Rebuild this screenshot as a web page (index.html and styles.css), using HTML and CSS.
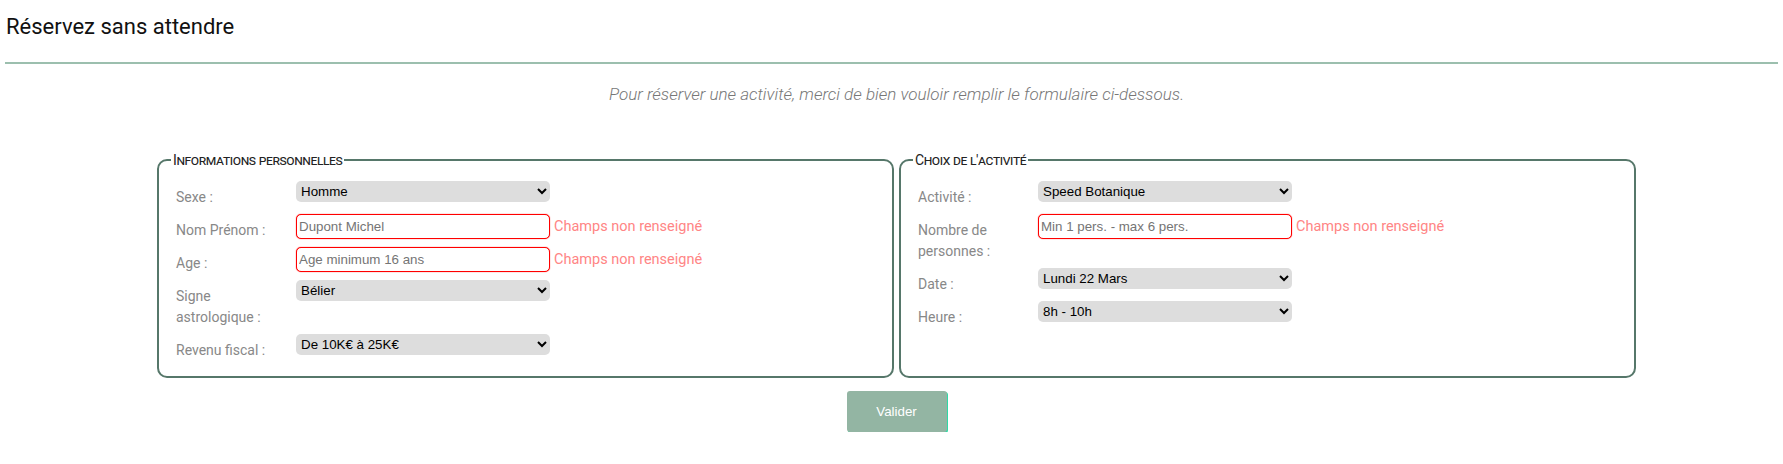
FILE: index.html
```html
<!DOCTYPE html>
<html lang="fr">
<head>
<meta charset="utf-8">
<title>Réservez sans attendre</title>
<link rel="stylesheet" href="styles.css">
</head>
<body>
<h1 class="title">Réservez sans attendre</h1>
<hr class="rule">
<p class="intro">Pour réserver une activité, merci de bien vouloir remplir le formulaire ci-dessous.</p>
<form class="booking">
  <div class="panels">
    <fieldset class="panel">
      <legend class="panel-title">Informations personnelles</legend>
      <div class="row">
        <label class="field-label">Sexe :</label>
        <select class="field-select"><option>Homme</option><option>Femme</option></select>
      </div>
      <div class="row">
        <label class="field-label">Nom Prénom :</label>
        <input class="field-input" type="text" placeholder="Dupont Michel">
        <span class="error">Champs non renseigné</span>
      </div>
      <div class="row">
        <label class="field-label">Age :</label>
        <input class="field-input" type="text" placeholder="Age minimum 16 ans">
        <span class="error">Champs non renseigné</span>
      </div>
      <div class="row">
        <label class="field-label">Signe astrologique :</label>
        <select class="field-select"><option>Bélier</option></select>
      </div>
      <div class="row">
        <label class="field-label">Revenu fiscal :</label>
        <select class="field-select"><option>De 10K€ à 25K€</option></select>
      </div>
    </fieldset>
    <fieldset class="panel">
      <legend class="panel-title">Choix de l'activité</legend>
      <div class="row">
        <label class="field-label">Activité :</label>
        <select class="field-select"><option>Speed Botanique</option></select>
      </div>
      <div class="row">
        <label class="field-label">Nombre de personnes :</label>
        <input class="field-input" type="text" placeholder="Min 1 pers. - max 6 pers.">
        <span class="error">Champs non renseigné</span>
      </div>
      <div class="row">
        <label class="field-label">Date :</label>
        <select class="field-select"><option>Lundi 22 Mars</option></select>
      </div>
      <div class="row">
        <label class="field-label">Heure :</label>
        <select class="field-select"><option>8h - 10h</option></select>
      </div>
    </fieldset>
  </div>
  <div class="actions">
    <button class="submit" type="button">Valider</button>
  </div>
</form>
</body>
</html>
```

FILE: styles.css
```css
html, body {
  margin: 0;
  padding: 0;
  background: #fff;
}
body {
  padding: 0 5px;
  font-family: Roboto, "Liberation Sans", sans-serif;
}
.title {
  margin: 0;
  padding: 14px 0 0 1px;
  font-size: 22px;
  line-height: 26px;
  font-weight: 400;
  color: #111;
}
.rule {
  margin: 22px 0 0 0;
  border: 0;
  border-top: 2px solid #9cbfae;
  height: 0;
}
.intro {
  margin: 19px 0 0 152px;
  width: 1479px;
  text-align: center;
  font-size: 17px;
  line-height: 22px;
  font-style: italic;
  font-weight: 300;
  color: #777;
}
.booking {
  margin: 46px 0 0 152px;
  width: 1479px;
}
.panels {
  display: flex;
  gap: 5px;
  align-items: stretch;
}
.panel {
  flex: 1 1 0;
  min-width: 0;
  margin: 0;
  padding: 12px 15px 15px 17px;
  border: 2px solid #56776a;
  border-radius: 10px;
}
.panel-title {
  margin-left: -5px;
  padding: 0 2px;
  font-size: 14px;
  line-height: 18px;
  letter-spacing: -0.4px;
  font-variant: small-caps;
  color: #222;
}
.row {
  display: flex;
  align-items: flex-start;
  margin-bottom: 6px;
}
.row:last-child {
  margin-bottom: 0;
}
.field-label {
  width: 105px;
  margin-right: 15px;
  padding-top: 6px;
  font-size: 14px;
  line-height: 21px;
  color: #888;
}
.field-select {
  width: 254px;
  height: 21px;
  box-sizing: border-box;
  border: 0;
  border-radius: 5px;
  background-color: #ddd;
  color: #000;
  font-family: "Liberation Sans", Arial, sans-serif;
  font-size: 13.33px;
  padding: 0 0 0 1px;
}
.field-input {
  width: 254px;
  height: 25px;
  box-sizing: border-box;
  margin: 0;
  padding: 1px 2px;
  border: 1px solid #f00;
  border-radius: 5px;
  box-shadow: 0 0 1px #f00;
  font-family: "Liberation Sans", Arial, sans-serif;
  font-size: 13.33px;
  outline: none;
}
.field-input::placeholder {
  color: #757575;
}
.error {
  margin-left: 4px;
  font-size: 14.5px;
  line-height: 25px;
  color: #ff8585;
  white-space: nowrap;
}
.actions {
  margin-top: 13px;
  text-align: center;
}
.submit {
  width: 100px;
  height: 41px;
  border: 0;
  border-radius: 3px;
  background: #93b5a3;
  box-shadow: 1px 1px 0 #2fd9a6;
  color: #fff;
  font-family: "Liberation Sans", Arial, sans-serif;
  font-size: 13.33px;
}
```
